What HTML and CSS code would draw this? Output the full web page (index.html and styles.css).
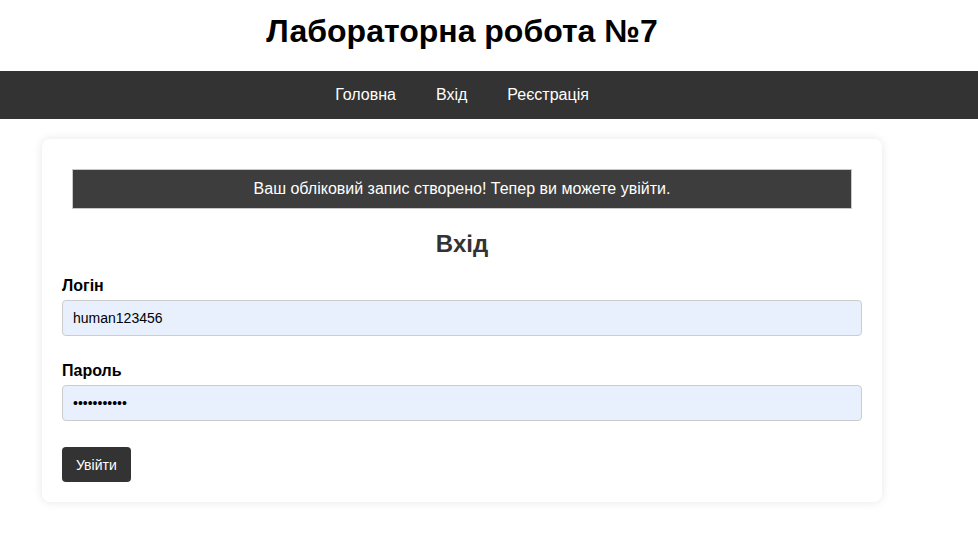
FILE: index.html
```html
<!DOCTYPE html>
<html lang="uk">
<head>
<meta charset="utf-8">
<title>Лабораторна робота №7</title>
<link rel="stylesheet" href="styles.css">
</head>
<body>
<header class="site-header">
  <h1 class="site-title">Лабораторна робота №7</h1>
</header>
<nav class="main-nav">
  <div class="nav-inner">
    <a href="#" class="nav-link">Головна</a>
    <a href="#" class="nav-link">Вхід</a>
    <a href="#" class="nav-link">Реєстрація</a>
  </div>
</nav>
<main class="page">
  <section class="card">
    <div class="alert">Ваш обліковий запис створено! Тепер ви можете увійти.</div>
    <h2 class="card-title">Вхід</h2>
    <form class="form">
      <div class="form-group">
        <label class="label" for="login">Логін</label>
        <input class="input" id="login" type="text" value="human123456">
      </div>
      <div class="form-group">
        <label class="label" for="password">Пароль</label>
        <input class="input" id="password" type="password" value="human123456">
      </div>
      <button class="btn" type="button">Увійти</button>
    </form>
  </section>
</main>
</body>
</html>
```
FILE: styles.css
```css
* { box-sizing: border-box; }
html, body { margin: 0; padding: 0; background: #fff; }
body {
  font-family: "Liberation Sans", Arial, sans-serif;
  color: #000;
  font-size: 16px;
}
.site-header {
  width: 924px;
  text-align: center;
  padding: 13px 0 21px;
}
.site-title {
  margin: 0;
  font-size: 32px;
  line-height: 37px;
  font-weight: bold;
}
.main-nav {
  background: #333;
  height: 48px;
}
.nav-inner {
  width: 924px;
  display: flex;
  justify-content: center;
}
.nav-link {
  color: #fff;
  text-decoration: none;
  padding: 15px 20px;
  line-height: 18px;
  font-size: 16px;
}
.page {
  width: 924px;
  padding: 20px 42px 40px;
}
.card {
  background: #fff;
  border-radius: 8px;
  box-shadow: 0 0 10px rgba(0, 0, 0, 0.1);
  padding: 20px;
}
.alert {
  margin: 10px 10px 0 10px;
  background: #3d3d3d;
  border: 1px solid #c8c8c8;
  color: #fff;
  text-align: center;
  padding: 10px;
  line-height: 18px;
  font-size: 16px;
}
.card-title {
  margin: 21px 0 20px;
  text-align: center;
  font-size: 24px;
  line-height: 27px;
  color: #333;
}
.form-group {
  margin-bottom: 26px;
}
.label {
  display: block;
  font-weight: bold;
  font-size: 16px;
  line-height: 18px;
  margin-bottom: 5px;
}
.input {
  display: block;
  width: 100%;
  height: 36px;
  padding: 0 10px;
  border: 1px solid #ccc;
  border-radius: 4px;
  background: #e8f0fe;
  font-family: "Liberation Sans", Arial, sans-serif;
  font-size: 14px;
  color: #000;
}
.btn {
  display: block;
  background: #333;
  color: #fff;
  border: none;
  border-radius: 4px;
  padding: 9px 14px;
  height: 35px;
  font-family: "Liberation Sans", Arial, sans-serif;
  font-size: 14px;
  line-height: 16px;
}
```
